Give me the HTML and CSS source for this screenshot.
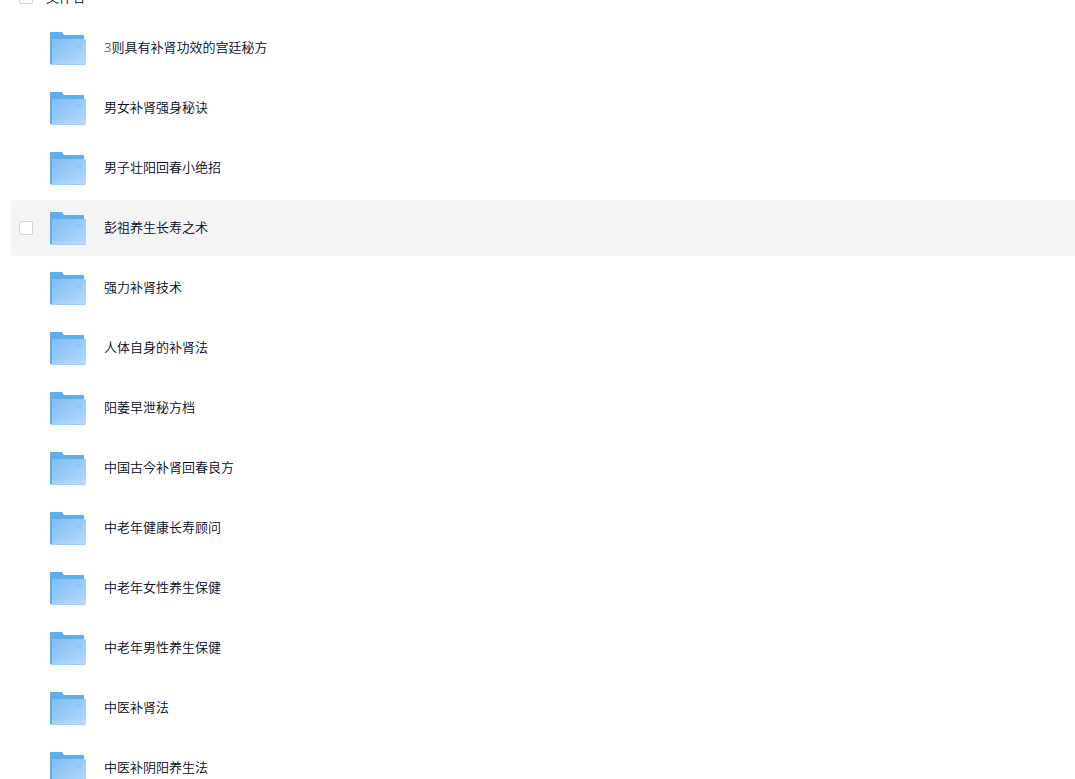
FILE: index.html
```html
<!DOCTYPE html>
<html lang="zh-CN">
<head>
<meta charset="utf-8">
<title>文件名</title>
<link rel="stylesheet" href="styles.css">
</head>
<body>
<svg class="defs" width="0" height="0" aria-hidden="true">
  <defs>
    <linearGradient id="front" x1="0" y1="0" x2="1" y2="1">
      <stop offset="0" stop-color="#7fbdf2"/>
      <stop offset="1" stop-color="#b5dafd"/>
    </linearGradient>
    <symbol id="folder" viewBox="0 0 36 36">
      <path fill="#60adec" d="M0 3a1 1 0 0 1 1-1h11l2 3h19a1 1 0 0 1 1 1v28.500H1a1 1 0 0 1-1-1z"/>
      <rect x="2" y="9" width="34" height="26" rx="1" fill="url(#front)"/>
      <path fill="#c0dffe" opacity=".3" d="M2 31h34v3H2z"/>
      <path fill="#a5cef6" d="M1 34h34.500v1H1z"/>
      <path fill="#84bff5" d="M27 14h5v1h-5zM27 16h5v1h-5z"/>
    </symbol>
  </defs>
</svg>
<main class="files">
  <header class="head">
    <input class="check" type="checkbox" id="all">
    <label class="title" for="all">文件名</label>
  </header>
  <ul class="list">
    <li class="row"><input class="check" type="checkbox" aria-labelledby="f1"><svg class="icon" aria-hidden="true"><use href="#folder"/></svg><a class="name" id="f1" href="#">3则具有补肾功效的宫廷秘方</a></li>
    <li class="row"><input class="check" type="checkbox" aria-labelledby="f2"><svg class="icon" aria-hidden="true"><use href="#folder"/></svg><a class="name" id="f2" href="#">男女补肾强身秘诀</a></li>
    <li class="row"><input class="check" type="checkbox" aria-labelledby="f3"><svg class="icon" aria-hidden="true"><use href="#folder"/></svg><a class="name" id="f3" href="#">男子壮阳回春小绝招</a></li>
    <li class="row active"><input class="check" type="checkbox" aria-labelledby="f4"><svg class="icon" aria-hidden="true"><use href="#folder"/></svg><a class="name" id="f4" href="#">彭祖养生长寿之术</a></li>
    <li class="row"><input class="check" type="checkbox" aria-labelledby="f5"><svg class="icon" aria-hidden="true"><use href="#folder"/></svg><a class="name" id="f5" href="#">强力补肾技术</a></li>
    <li class="row"><input class="check" type="checkbox" aria-labelledby="f6"><svg class="icon" aria-hidden="true"><use href="#folder"/></svg><a class="name" id="f6" href="#">人体自身的补肾法</a></li>
    <li class="row"><input class="check" type="checkbox" aria-labelledby="f7"><svg class="icon" aria-hidden="true"><use href="#folder"/></svg><a class="name" id="f7" href="#">阳萎早泄秘方档</a></li>
    <li class="row"><input class="check" type="checkbox" aria-labelledby="f8"><svg class="icon" aria-hidden="true"><use href="#folder"/></svg><a class="name" id="f8" href="#">中国古今补肾回春良方</a></li>
    <li class="row"><input class="check" type="checkbox" aria-labelledby="f9"><svg class="icon" aria-hidden="true"><use href="#folder"/></svg><a class="name" id="f9" href="#">中老年健康长寿顾问</a></li>
    <li class="row"><input class="check" type="checkbox" aria-labelledby="f10"><svg class="icon" aria-hidden="true"><use href="#folder"/></svg><a class="name" id="f10" href="#">中老年女性养生保健</a></li>
    <li class="row"><input class="check" type="checkbox" aria-labelledby="f11"><svg class="icon" aria-hidden="true"><use href="#folder"/></svg><a class="name" id="f11" href="#">中老年男性养生保健</a></li>
    <li class="row"><input class="check" type="checkbox" aria-labelledby="f12"><svg class="icon" aria-hidden="true"><use href="#folder"/></svg><a class="name" id="f12" href="#">中医补肾法</a></li>
    <li class="row"><input class="check" type="checkbox" aria-labelledby="f13"><svg class="icon" aria-hidden="true"><use href="#folder"/></svg><a class="name" id="f13" href="#">中医补阴阳养生法</a></li>
  </ul>
</main>
</body>
</html>
```
FILE: styles.css
```css
* {
  box-sizing: border-box;
}

body {
  margin: 0;
  height: 100vh;
  overflow: hidden;
  background: #fff;
  color: #03081a;
  font: 350 13px/20px "Open Sans", "Noto Sans CJK SC", sans-serif;
}

.defs {
  display: block;
}

.files {
  padding-left: 11px;
}

/* The list is scrolled so that the header is mostly out of view. */
.head {
  display: flex;
  align-items: center;
  gap: 13px;
  height: 40px;
  margin-top: -23px;
  margin-bottom: 3px;
  padding-left: 8px;
}

.list {
  display: flex;
  flex-direction: column;
  gap: 4px;
  margin: 0;
  padding: 0;
  list-style: none;
}

.row {
  display: flex;
  align-items: center;
  height: 56px;
  padding-left: 8px;
  border-radius: 4px 0 0 4px;
}

.check {
  flex: none;
  appearance: none;
  width: 14px;
  height: 14px;
  margin: 0;
  border: 1px solid #d5d5d6;
  border-radius: 2px;
  background: #fff;
}

.row .check {
  opacity: 0;
}

.active {
  background: #f4f4f4;
}

.active .check,
.row .check:checked {
  opacity: 1;
}

.check:checked {
  background: #60adec;
}

.icon {
  flex: none;
  width: 36px;
  height: 36px;
  margin: 0 18px 0 17px;
}

.name {
  padding-bottom: 2px;
  color: inherit;
  text-decoration: none;
}
```
